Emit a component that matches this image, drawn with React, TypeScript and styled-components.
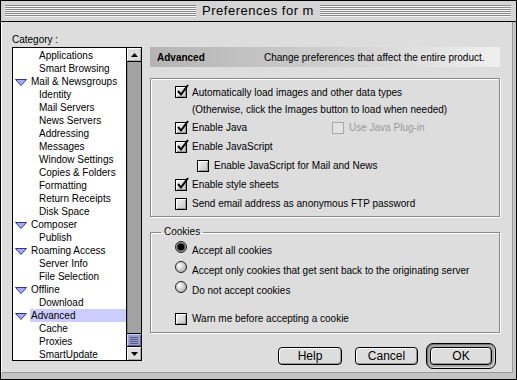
import React from "react";
import styled, { createGlobalStyle } from "styled-components";

const GlobalStyle = createGlobalStyle`
  html, body {
    margin: 0;
    padding: 0;
    background: #cccccc;
  }
  body {
    font-family: "Liberation Sans", Arial, sans-serif;
    color: #000;
  }
`;

const Window = styled.div`
  width: 517px;
  height: 380px;
  box-sizing: border-box;
  border: 1px solid #000;
  background: #c4c4c4;
  display: flex;
  flex-direction: column;
`;

const TitleBar = styled.div`
  height: 20px;
  flex: none;
  display: flex;
  align-items: center;
  padding: 0 5px 0 4px;
  background: #d4d4d4;
  border-bottom: 1px solid #000;
`;

const Stripes = styled.div`
  flex: 1;
  height: 12px;
  background: repeating-linear-gradient(
    to bottom,
    #8a8a8a 0 1px,
    #f6f6f6 1px 2px
  );
`;

const TitleText = styled.div`
  padding: 0 6px;
  font-size: 13px;
  letter-spacing: 0.5px;
  line-height: 20px;
`;

const Body = styled.div`
  flex: 1;
  display: flex;
  margin: 0 3px 6px 0;
  padding: 11px 0 0 10px;
  background: #dddddd;
  border-left: 1px solid #fff;
  border-right: 1px solid #999;
  border-bottom: 1px solid #999;
`;

const LeftColumn = styled.div`
  width: 130px;
  display: flex;
  flex-direction: column;
`;

const SmallLabel = styled.div`
  font-size: 10px;
  line-height: 14px;
`;

const ListBox = styled.div`
  height: 314px;
  box-sizing: border-box;
  border: 1px solid #000;
  background: #fff;
  display: flex;
`;

const ListRows = styled.div`
  flex: 1;
  padding-top: 1px;
  overflow: hidden;
`;

const Row = styled.div<{ $level: number }>`
  height: 13px;
  display: flex;
  align-items: center;
  padding-left: ${(p) => (p.$level === 0 ? 2 : 25)}px;
  font-size: 10px;
  white-space: nowrap;
`;

const RowText = styled.span<{ $selected?: boolean }>`
  flex: 1;
  line-height: 13px;
  padding-left: 1px;
  background: ${(p) => (p.$selected ? "#ccccff" : "transparent")};
`;

const Twisty = styled.svg`
  width: 12px;
  height: 8px;
  margin-right: 3px;
  margin-top: 2px;
  flex: none;
`;

const ScrollBar = styled.div`
  width: 14px;
  border-left: 1px solid #000;
  display: flex;
  flex-direction: column;
  background: #dddddd;
`;

const ArrowBox = styled.div<{ $bottom?: boolean }>`
  height: 13px;
  display: flex;
  align-items: center;
  justify-content: center;
  background: #dddddd;
  box-shadow: inset 1px 1px #fff, inset -1px -1px #aaa;
  ${(p) => (p.$bottom ? "border-top: 1px solid #000;" : "border-bottom: 1px solid #000;")}
`;

const Track = styled.div`
  flex: 1;
  background: #a3a3a3;
  box-shadow: inset 1px 0 #888;
`;

const Thumb = styled.div`
  height: 12px;
  border-top: 1px solid #000;
  background: #9c9cce;
  box-shadow: inset 1px 1px #ccccff, inset -1px -1px #666699;
  display: flex;
  flex-direction: column;
  align-items: center;
  justify-content: center;
  gap: 1px;
`;

const Grip = styled.div`
  width: 8px;
  height: 1px;
  background: #555588;
`;

const RightColumn = styled.div`
  width: 350px;
  margin-left: 8px;
  padding-top: 14px;
  display: flex;
  flex-direction: column;
`;

const Header = styled.div`
  height: 20px;
  display: flex;
  align-items: center;
  padding: 0 9px 0 7px;
  font-size: 10px;
  background: linear-gradient(to right, #b4b4b4 0%, #c8c8c8 40%, #efefef 100%);
`;

const HeaderTitle = styled.span`
  width: 107px;
  font-weight: bold;
`;

const GroupBox = styled.fieldset<{ $top: number }>`
  margin: ${(p) => p.$top}px 0 0 0;
  padding: 0 0 0 24px;
  border: 1px solid #888;
  box-shadow: inset 1px 1px #fff, 1px 1px #fff;
  min-width: 0;
`;

const Legend = styled.legend`
  font-size: 10px;
  padding: 0 3px;
  margin-left: -14px;
  line-height: 10px;
`;

const OptionList = styled.div<{ $pt: number; $pb: number }>`
  display: flex;
  flex-direction: column;
  padding: ${(p) => p.$pt}px 0 ${(p) => p.$pb}px;
`;

const Option = styled.div<{ $indent?: number; $rowHeight: number; $mt?: number }>`
  display: flex;
  align-items: flex-start;
  min-height: ${(p) => p.$rowHeight}px;
  margin-left: ${(p) => p.$indent || 0}px;
  margin-top: ${(p) => p.$mt || 0}px;
`;

const OptionText = styled.span<{ $disabled?: boolean; $lh: number; $width?: number }>`
  font-size: 10px;
  line-height: ${(p) => p.$lh}px;
  margin-left: 5px;
  ${(p) => (p.$width ? `width: ${p.$width}px;` : "")}
  color: ${(p) => (p.$disabled ? "#999" : "#000")};
`;

const CheckBox = styled.span<{ $disabled?: boolean; $top: number }>`
  position: relative;
  flex: none;
  width: 12px;
  height: 12px;
  margin-top: ${(p) => p.$top}px;
  box-sizing: border-box;
  border: 1px solid ${(p) => (p.$disabled ? "#aaa" : "#000")};
  background: ${(p) => (p.$disabled ? "#e2e2e2" : "linear-gradient(135deg, #f4f4f4, #c4c4c4)")};
  box-shadow: ${(p) => (p.$disabled ? "none" : "inset 1px 1px #fff, inset -1px -1px #999")};
`;

const CheckMark = styled.svg`
  position: absolute;
  left: 0px;
  top: -3px;
  width: 13px;
  height: 13px;
  overflow: visible;
`;

const Radio = styled.span<{ $on?: boolean; $top: number }>`
  flex: none;
  width: 12px;
  height: 12px;
  margin-top: ${(p) => p.$top}px;
  box-sizing: border-box;
  border-radius: 50%;
  border: 1px solid #222;
  background: ${(p) =>
    p.$on
      ? "radial-gradient(circle at 50% 50%, #000 0 3px, #555 3px 4px, #bbb 5px)"
      : "radial-gradient(circle at 35% 35%, #ffffff 0, #e0e0e0 30%, #a8a8a8 85%)"};
`;

const ButtonRow = styled.div`
  margin-top: 10px;
  padding-right: 4px;
  display: flex;
  align-items: center;
  justify-content: flex-end;
`;

const Button = styled.button<{ $width: number; $mr?: number }>`
  width: ${(p) => p.$width}px;
  height: 18px;
  margin: 0 ${(p) => p.$mr || 0}px 0 0;
  padding: 0;
  border: 1px solid #000;
  border-radius: 4px;
  background: #dddddd;
  box-shadow: inset 1px 1px #fff, inset -1px -1px #999;
  font-family: "Liberation Sans", Arial, sans-serif;
  font-size: 12px;
  line-height: 16px;
  color: #000;
`;

const DefaultRing = styled.div`
  padding: 3px;
  border: 1px solid #000;
  border-radius: 7px;
  background: #a8a8a8;
  box-shadow: inset 1px 1px #777, inset -1px -1px #ddd;
  display: flex;
`;

type Item = { label: string; level: number; selected?: boolean };

const items: Item[] = [
  { label: "Applications", level: 1 },
  { label: "Smart Browsing", level: 1 },
  { label: "Mail & Newsgroups", level: 0 },
  { label: "Identity", level: 1 },
  { label: "Mail Servers", level: 1 },
  { label: "News Servers", level: 1 },
  { label: "Addressing", level: 1 },
  { label: "Messages", level: 1 },
  { label: "Window Settings", level: 1 },
  { label: "Copies & Folders", level: 1 },
  { label: "Formatting", level: 1 },
  { label: "Return Receipts", level: 1 },
  { label: "Disk Space", level: 1 },
  { label: "Composer", level: 0 },
  { label: "Publish", level: 1 },
  { label: "Roaming Access", level: 0 },
  { label: "Server Info", level: 1 },
  { label: "File Selection", level: 1 },
  { label: "Offline", level: 0 },
  { label: "Download", level: 1 },
  { label: "Advanced", level: 0, selected: true },
  { label: "Cache", level: 1 },
  { label: "Proxies", level: 1 },
  { label: "SmartUpdate", level: 1 },
];

const Check: React.FC<{ checked?: boolean; disabled?: boolean; top: number }> = ({
  checked,
  disabled,
  top,
}) => (
  <CheckBox $disabled={disabled} $top={top}>
    {checked && (
      <CheckMark viewBox="0 0 13 13">
        <path d="M2 7 L5 10.5 L12 1" fill="none" stroke="#000" strokeWidth="2" />
      </CheckMark>
    )}
  </CheckBox>
);

const App: React.FC = () => {
  return (
    <>
      <GlobalStyle />
      <Window>
        <TitleBar>
          <Stripes />
          <TitleText>Preferences for m</TitleText>
          <Stripes />
        </TitleBar>
        <Body>
          <LeftColumn>
            <SmallLabel>Category :</SmallLabel>
            <ListBox>
              <ListRows>
                {items.map((it) => (
                  <Row key={it.label} $level={it.level}>
                    {it.level === 0 && (
                      <Twisty viewBox="0 0 12 8">
                        <polygon
                          points="0.5,0.5 11.5,0.5 6,6.5"
                          fill="#a8a8f8"
                          stroke="#333388"
                          strokeWidth="1"
                        />
                      </Twisty>
                    )}
                    <RowText $selected={it.selected}>{it.label}</RowText>
                  </Row>
                ))}
              </ListRows>
              <ScrollBar>
                <ArrowBox>
                  <svg width="7" height="4" viewBox="0 0 7 4">
                    <polygon points="3.5,0 7,4 0,4" fill="#000" />
                  </svg>
                </ArrowBox>
                <Track />
                <Thumb>
                  <Grip />
                  <Grip />
                  <Grip />
                  <Grip />
                </Thumb>
                <ArrowBox $bottom>
                  <svg width="7" height="4" viewBox="0 0 7 4">
                    <polygon points="0,0 7,0 3.5,4" fill="#000" />
                  </svg>
                </ArrowBox>
              </ScrollBar>
            </ListBox>
          </LeftColumn>

          <RightColumn>
            <Header>
              <HeaderTitle>Advanced</HeaderTitle>
              <span>Change preferences that affect the entire product.</span>
            </Header>

            <GroupBox $top={11}>
              <OptionList $pt={5} $pb={3}>
                <Option $rowHeight={33}>
                  <Check checked top={2} />
                  <OptionText $lh={17}>
                    Automatically load images and other data types
                    <br />
                    (Otherwise, click the Images button to load when needed)
                  </OptionText>
                </Option>
                <Option $rowHeight={19}>
                  <Check checked top={4} />
                  <OptionText $lh={19} $width={140}>
                    Enable Java
                  </OptionText>
                  <Check disabled top={4} />
                  <OptionText $lh={19} $disabled>
                    Use Java Plug-in
                  </OptionText>
                </Option>
                <Option $rowHeight={19}>
                  <Check checked top={4} />
                  <OptionText $lh={19}>Enable JavaScript</OptionText>
                </Option>
                <Option $rowHeight={19} $indent={22}>
                  <Check top={4} />
                  <OptionText $lh={19}>Enable JavaScript for Mail and News</OptionText>
                </Option>
                <Option $rowHeight={19}>
                  <Check checked top={4} />
                  <OptionText $lh={19}>Enable style sheets</OptionText>
                </Option>
                <Option $rowHeight={19}>
                  <Check top={4} />
                  <OptionText $lh={19}>Send email address as anonymous FTP password</OptionText>
                </Option>
              </OptionList>
            </GroupBox>

            <GroupBox $top={10}>
              <Legend>Cookies</Legend>
              <OptionList $pt={4} $pb={3}>
                <Option $rowHeight={20}>
                  <Radio $on top={4} />
                  <OptionText $lh={20}>Accept all cookies</OptionText>
                </Option>
                <Option $rowHeight={20}>
                  <Radio top={4} />
                  <OptionText $lh={20}>
                    Accept only cookies that get sent back to the originating server
                  </OptionText>
                </Option>
                <Option $rowHeight={20}>
                  <Radio top={4} />
                  <OptionText $lh={20}>Do not accept cookies</OptionText>
                </Option>
                <Option $rowHeight={20} $mt={8}>
                  <Check top={4} />
                  <OptionText $lh={20}>Warn me before accepting a cookie</OptionText>
                </Option>
              </OptionList>
            </GroupBox>

            <ButtonRow>
              <Button $width={64} $mr={13}>
                Help
              </Button>
              <Button $width={63} $mr={8}>
                Cancel
              </Button>
              <DefaultRing>
                <Button $width={62}>OK</Button>
              </DefaultRing>
            </ButtonRow>
          </RightColumn>
        </Body>
      </Window>
    </>
  );
};

export default App;
